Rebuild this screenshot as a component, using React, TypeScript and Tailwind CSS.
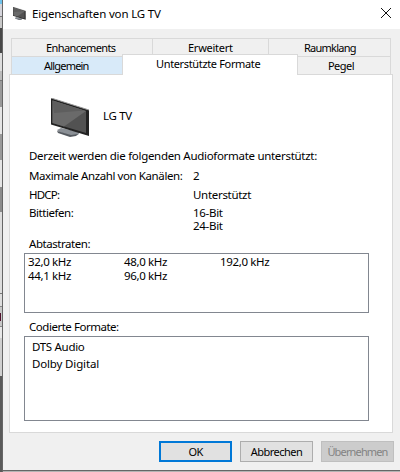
import clsx from "clsx"

const backTabs = [
  { title: "Enhancements", className: "w-[141px] pl-[34px] tracking-[-0.6px]" },
  { title: "Erweitert", className: "w-[116px] pl-[35px] tracking-[-0.25px]" },
  { title: "Raumklang", className: "w-[123px] border-r pl-[35px] tracking-[-0.75px]" },
]

const sampleRates = ["32,0 kHz", "48,0 kHz", "192,0 kHz", "44,1 kHz", "96,0 kHz"]

function TvIcon({ className }: { className?: string }) {
  return (
    <svg viewBox="0 0 39 39" preserveAspectRatio="none" className={className}>
      <path d="M6 32l4-2 19 4-2 3-6 1-13-4z" fill="#8b9096" />
      <path d="M6 33l14 4 7-1-2 2-6 1-12-4z" fill="#555a60" />
      <path d="M0 0l38 12v26L0 26.500z" fill="#222" />
      <path d="M1.500 2.500L35 13v22L1.500 25z" fill="#525252" />
      <path d="M1.500 2.500L35 13 13 28.500l-11.500-3.500z" fill="#6a6a6a" />
      <path d="M1.500 2.500L33 12.500 3 15z" fill="#5e5e5e" />
      <path d="M0 0l38 12" stroke="#999" />
    </svg>
  )
}

// Slice of the window behind the dialog
function Backdrop() {
  return (
    <div className="flex w-[3px] shrink-0 flex-col overflow-hidden border-r border-[#666] bg-[#c8c8c8]">
      <div className="h-[4px] bg-[#6fc3ec]" />
      <div className="h-[13px] border-b border-[#777] bg-[#d5d5dc]" />
      <div className="h-[11px] bg-[#c8c8c8]" />
      <div className="h-[25px] bg-[#484848]" />
      <div className="h-[18px] bg-[#ddd]" />
      <div className="h-[10px] border-b border-[#777] bg-[#bbb]" />
      <div className="h-[26px] bg-[#999]" />
      <div className="h-[27px] bg-[#e5e5e5]" />
      <div className="h-[26px] bg-[#999]" />
      <div className="h-[27px] bg-[#e5e5e5]" />
      <div className="h-[25px] bg-[#8c8c8c]" />
      <div className="h-[82px] border-b border-[#777] bg-[#ddd]" />
      <div className="h-[13px] border-b border-[#888] bg-[#ddd]" />
      <div className="h-[20px] border-b border-[#888] pt-[6px]">
        <div className="h-[8px] w-px bg-[#50102c]" />
      </div>
      <div className="h-[11px] bg-[#e8e8e8]" />
      <div className="h-[38px] bg-[#d0d0d0]" />
      <div className="flex-1 bg-[#5a5a5a]" />
    </div>
  )
}

export default function App() {
  return (
    <div className="flex h-[472px] w-[400px] overflow-hidden bg-[#b5b3b3] font-['Noto_Sans','Open_Sans',sans-serif] text-[11.5px] leading-[15px] whitespace-nowrap text-black">
      <Backdrop />

      <div className="flex h-[471px] flex-1 flex-col border-b border-[#666] bg-[#f0f0f0]">
        <div className="flex h-[29px] shrink-0 items-start bg-white pt-[6px] pl-[10px]">
          <TvIcon className="mt-px h-[13px] w-[13px]" />
          <div className="ml-[6px] tracking-[-0.17px]">Eigenschaften von LG TV</div>
          <svg className="mt-[2px] mr-[9px] ml-auto size-[10px]" viewBox="0 0 10 10">
            <path d="M0 0l10 10M10 0L0 10" stroke="#111" />
          </svg>
        </div>

        <div className="mt-[9px] ml-[8px] flex h-[18px] shrink-0 text-[11px]">
          {backTabs.map(tab => (
            <div
              key={tab.title}
              className={clsx("border-t border-l border-[#d9d9d9] pt-px", tab.className)}
            >
              {tab.title}
            </div>
          ))}
        </div>

        <div className="relative z-10 -mt-[2px] -mb-px ml-[8px] flex h-[21px] shrink-0 text-[11px]">
          <div className="mt-[2px] h-[18px] w-[111px] border-t border-l border-[#d9d9d9] bg-[#d8eaf9] pt-px pl-[32px] tracking-[-0.8px]">
            Allgemein
          </div>
          <div className="w-[176px] border-x border-t border-[#d9d9d9] bg-white pt-px pl-[33px] tracking-[-0.35px]">
            Unterstützte Formate
          </div>
          <div className="mt-[2px] h-[18px] w-[93px] border-t border-r border-[#d9d9d9] pt-px pl-[30px] tracking-[-0.55px]">
            Pegel
          </div>
        </div>

        <div className="ml-[6px] flex h-[359px] w-[384px] shrink-0 flex-col border border-[#d9d9d9] bg-white">
          <div className="mt-[23px] ml-[41px] flex h-[39px] shrink-0">
            <TvIcon className="h-[39px] w-[39px]" />
            <div className="mt-[10px] ml-[13px] tracking-[-0.3px]">LG TV</div>
          </div>

          <div className="mt-[11px] ml-[19px] tracking-[-0.3px]">
            Derzeit werden die folgenden Audioformate unterstützt:
          </div>
          <div className="mt-[5px] ml-[19px] flex tracking-[-0.4px]">
            <div className="w-[164px]">Maximale Anzahl von Kanälen:</div>
            <div>2</div>
          </div>
          <div className="mt-[4px] ml-[19px] flex tracking-[-0.3px]">
            <div className="w-[164px] tracking-[-0.8px]">HDCP:</div>
            <div>Unterstützt</div>
          </div>
          <div className="mt-[3px] ml-[19px] flex h-[28px] tracking-[-0.3px]">
            <div className="w-[164px] tracking-[-0.45px]">Bittiefen:</div>
            <div className="leading-[13px]">
              <div className="pt-px">16-Bit</div>
              <div>24-Bit</div>
            </div>
          </div>

          <div className="mt-[3px] ml-[19px] tracking-[-0.45px]">Abtastraten:</div>
          <div className="mt-[2px] ml-[14px] grid h-[60px] w-[345px] shrink-0 grid-cols-[96px_96px_96px] content-start border border-[#828790] pt-px pl-[3px] leading-[14px] tracking-[-0.35px]">
            {sampleRates.map(rate => (
              <div key={rate}>{rate}</div>
            ))}
          </div>

          <div className="mt-[6px] ml-[19px] tracking-[-0.47px]">Codierte Formate:</div>
          <div className="mt-[2px] ml-[14px] h-[85px] w-[345px] shrink-0 border border-[#828790] pt-px pl-[7px] leading-[17px]">
            <div className="tracking-[-0.3px]">DTS Audio</div>
            <div className="tracking-[-0.15px]">Dolby Digital</div>
          </div>
        </div>

        <div className="mt-[8px] mr-[6px] flex justify-end gap-[8px] text-[11px] leading-[18px]">
          <button className="h-[21px] w-[73px] border-2 border-[#0078d7] bg-[#e1e1e1] leading-[17px] tracking-[-0.6px]">
            OK
          </button>
          <button className="h-[21px] w-[73px] border border-[#adadad] bg-[#e1e1e1] tracking-[-0.5px]">
            Abbrechen
          </button>
          <button
            disabled
            className="h-[21px] w-[73px] border border-[#bfbfbf] bg-[#ccc] tracking-[-0.85px] text-[#838383]"
          >
            Übernehmen
          </button>
        </div>
      </div>
    </div>
  )
}
